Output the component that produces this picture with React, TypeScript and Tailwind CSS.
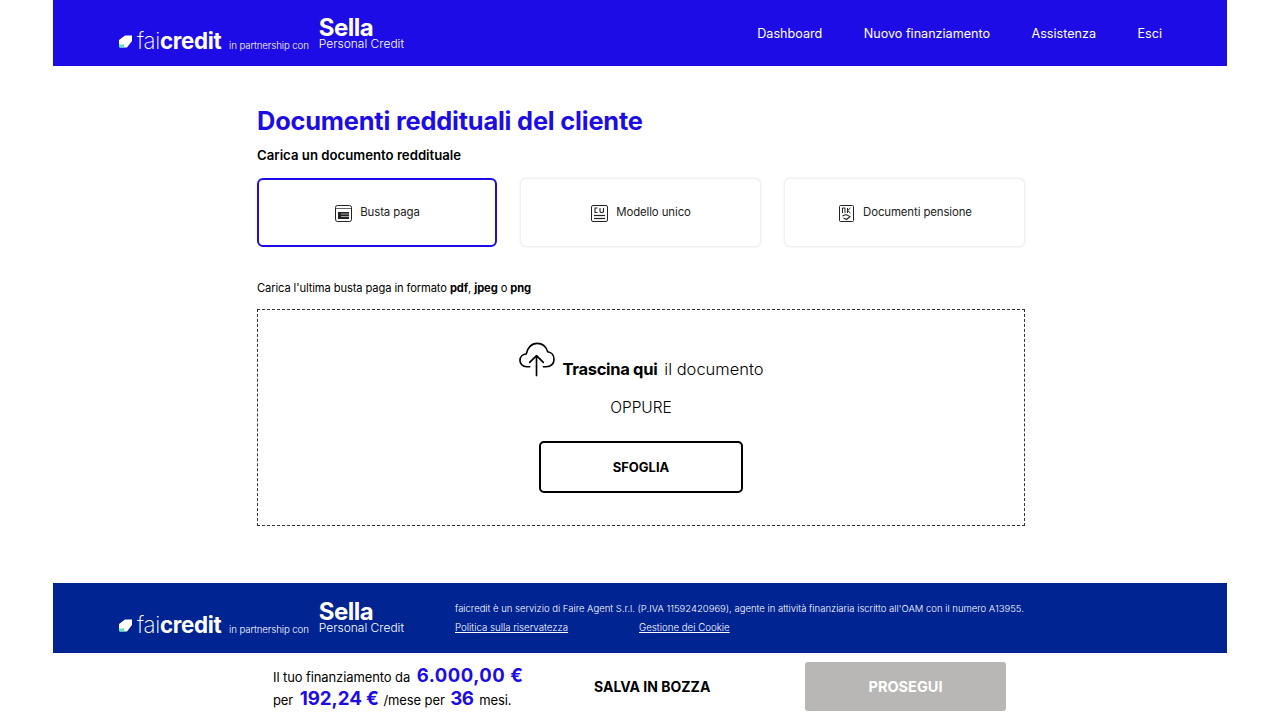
const font = "font-['Inter','Noto_Sans',sans-serif]";

function LogoMark() {
  return (
    <svg width="13" height="13" viewBox="0 0 13 13" className="block">
      <path d="M0 5 L6 0.5 H13 V6 L8 12.5 H1.5 Q0 12.5 0 11 Z" fill="#ffffff" />
      <path d="M0 9.5 H5 V12.5 H1.5 Q0 12.5 0 11 Z" fill="#5fe0c0" />
    </svg>
  );
}

function Logos() {
  return (
    <div className="flex items-end text-white w-[285px] shrink-0">
      <div className="mb-[6px] mr-[5px]">
        <LogoMark />
      </div>
      <div className="text-[22.3px] leading-[24px] tracking-[-0.3px] w-[84px] mb-[1px] whitespace-nowrap">
        <span className="font-extralight">fai</span>
        <span className="font-bold">credit</span>
      </div>
      <div className="text-[9.7px] leading-[12px] font-light w-[90px] mb-[2px] ml-[8px] whitespace-nowrap tracking-[-0.1px]">
        in partnership con
      </div>
      <div className="flex flex-col mb-[4px]">
        <div className="text-[24px] leading-[21px] font-bold tracking-[-0.5px]">Sella</div>
        <div className="text-[12px] leading-[12px] font-light whitespace-nowrap">Personal Credit</div>
      </div>
    </div>
  );
}

function BustaIcon() {
  return (
    <svg width="17" height="17" viewBox="0 0 17 17" fill="none" stroke="#222" strokeWidth="1">
      <rect x="0.5" y="0.5" width="16" height="16" rx="2" />
      <line x1="1" y1="3.5" x2="16" y2="3.5" strokeWidth="0.7" />
      <rect x="3" y="7" width="11" height="7" fill="#222" stroke="none" />
      <line x1="6" y1="9" x2="14" y2="9" stroke="#fff" strokeWidth="0.6" />
      <line x1="6" y1="11.5" x2="14" y2="11.5" stroke="#fff" strokeWidth="0.6" />
    </svg>
  );
}

function UnicoIcon() {
  return (
    <svg width="17" height="17" viewBox="0 0 17 17" fill="none" stroke="#222" strokeWidth="1">
      <rect x="0.5" y="0.5" width="16" height="16" rx="1.5" />
      <path d="M6.5 3 H4 V7.5 H6.5 M9 3 V6.5 Q9 7.5 10.5 7.5 Q12.5 7.5 12.5 6.5 V3" strokeWidth="1.1" />
      <line x1="3" y1="10.5" x2="14" y2="10.5" strokeWidth="1.2" />
      <line x1="3" y1="13.5" x2="14" y2="13.5" strokeWidth="1.2" />
    </svg>
  );
}

function PensioneIcon() {
  return (
    <svg width="17" height="17" viewBox="0 0 17 17" fill="none" stroke="#222" strokeWidth="1">
      <rect x="1.5" y="0.5" width="14" height="16" rx="1" />
      <path d="M4.5 3 V8 M4.5 3 H7 V8 M9.5 3 V8 M12.5 3 L9.5 5.5 L12.5 8" strokeWidth="1" />
      <path d="M4.5 11 L8 9.5 L12 11.5 L8.5 14.5 L5.5 13" strokeWidth="1.1" />
    </svg>
  );
}

function DocCard({ label, icon, active }: { label: string; icon: React.ReactNode; active?: boolean }) {
  return (
    <div
      className={
        active
          ? "w-[240px] h-[69px] rounded-[6px] border-2 border-[#1e0ce6] bg-white flex items-center justify-center gap-[8px] pl-[1px] pt-[1px]"
          : "w-[241px] h-[69px] rounded-[6px] border border-[#f0f0f0] shadow-[0_0_3px_rgba(0,0,0,0.08)] bg-white flex items-center justify-center gap-[8px] pl-[1px] pt-[1px]"
      }
    >
      {icon}
      <span className="text-[11.4px] text-[#222] tracking-[-0.1px]">{label}</span>
    </div>
  );
}

function CloudIcon() {
  return (
    <svg width="36" height="35" viewBox="0 0 37 35" fill="none" stroke="#000" strokeWidth="1.7" strokeLinecap="round" strokeLinejoin="round" className="ml-[1px]">
      <path d="M11 25 H8 C3.5 25 1 21.5 1 18.5 C1 14.5 4 12 7.5 11.8 C8.5 5.5 13 1 18.5 1 C24 1 28 4.5 29.5 9.5 C33.5 10 36 13.5 36 17.5 C36 21.5 33 25 28 25 H25" />
      <path d="M18 34 V14 M11 20.5 L18 13.5 L25 20.5" />
    </svg>
  );
}

export default function App() {
  return (
    <div className={`${font} w-[1174px] h-[720px] mx-auto bg-white flex flex-col text-black overflow-hidden`}>
      <header className="h-[66px] shrink-0 bg-[#1e0ce6] flex items-end justify-between pl-[66px] pr-[65px] text-white">
        <div className="pb-[12px]">
          <Logos />
        </div>
        <nav className="flex gap-[41.5px] text-[12.6px] h-full items-center pt-[2px]">
          <span>Dashboard</span>
          <span>Nuovo finanziamento</span>
          <span>Assistenza</span>
          <span>Esci</span>
        </nav>
      </header>

      <main className="flex-1 pl-[204px]">
        <div className="w-[768px]">
          <h1 className="mt-[39px] text-[25.4px] leading-[32px] font-bold text-[#1e0ce6] tracking-[-0.2px]">
            Documenti reddituali del cliente
          </h1>
          <p className="mt-[9px] text-[13.2px] leading-[18px] font-semibold">Carica un documento reddituale</p>
          <div className="mt-[14px] flex justify-between">
            <DocCard label="Busta paga" icon={<BustaIcon />} active />
            <DocCard label="Modello unico" icon={<UnicoIcon />} />
            <DocCard label="Documenti pensione" icon={<PensioneIcon />} />
          </div>
          <p className="mt-[33px] text-[11.15px] leading-[16px] tracking-[-0.1px]">
            Carica l'ultima busta paga in formato <b className="font-bold">pdf</b>, <b className="font-bold">jpeg</b> o{" "}
            <b className="font-bold">png</b>
          </p>
          <div className="mt-[13px] h-[217px] border border-dashed border-[#333] flex flex-col items-center">
            <div className="mt-[32px] flex items-end gap-[7px]">
              <CloudIcon />
              <span className="text-[16.5px] leading-[24px] mb-[-4px]">
                <b className="font-bold tracking-[-0.3px]">Trascina qui</b>
                <span className="font-light ml-[7px]">il documento</span>
              </span>
            </div>
            <div className="mt-[19px] text-[15.5px] leading-[24px] font-light">OPPURE</div>
            <button className="mt-[21px] w-[204px] h-[52px] border-2 border-black rounded-[5px] text-[13px] font-bold pt-[1px]">
              SFOGLIA
            </button>
          </div>
        </div>
      </main>

      <footer className="h-[70px] shrink-0 bg-[#002492] flex pl-[66px] text-white">
        <div className="pt-[18px]">
          <Logos />
        </div>
        <div className="ml-[51px] pt-[19px] text-[9.5px] leading-[14px] font-light">
          <p className="whitespace-nowrap">
            faicredit è un servizio di Faire Agent S.r.l. (P.IVA 11592420969), agente in attività finanziaria iscritto all'OAM con il numero A13955.
          </p>
          <div className="mt-[5px] flex text-[9.7px]">
            <a className="underline w-[184px]">Politica sulla riservatezza</a>
            <a className="underline">Gestione dei Cookie</a>
          </div>
        </div>
      </footer>

      <div className="h-[67px] shrink-0 bg-white flex items-center pl-[220px]">
        <div className="w-[321px] mt-[4px] text-[13px] leading-[23px] tracking-[-0.1px] whitespace-nowrap">
          <div>
            Il tuo finanziamento da{" "}
            <b className="ml-[3px] text-[18.5px] leading-none font-bold text-[#1e0ce6] tracking-[0.5px]">6.000,00 €</b>
          </div>
          <div>
            per <b className="ml-[3px] mr-[1px] text-[18.8px] leading-none font-bold text-[#1e0ce6]">192,24 €</b> /mese per{" "}
            <b className="mx-[2px] text-[18.8px] leading-none font-bold text-[#1e0ce6] tracking-[-0.5px]">36</b> mesi.
          </div>
        </div>
        <div className="w-[211px] text-[14px] font-bold">SALVA IN BOZZA</div>
        <button className="w-[201px] h-[49px] rounded-[3px] bg-[#b8b7b5] text-white text-[14.5px] font-bold">
          PROSEGUI
        </button>
      </div>
    </div>
  );
}
